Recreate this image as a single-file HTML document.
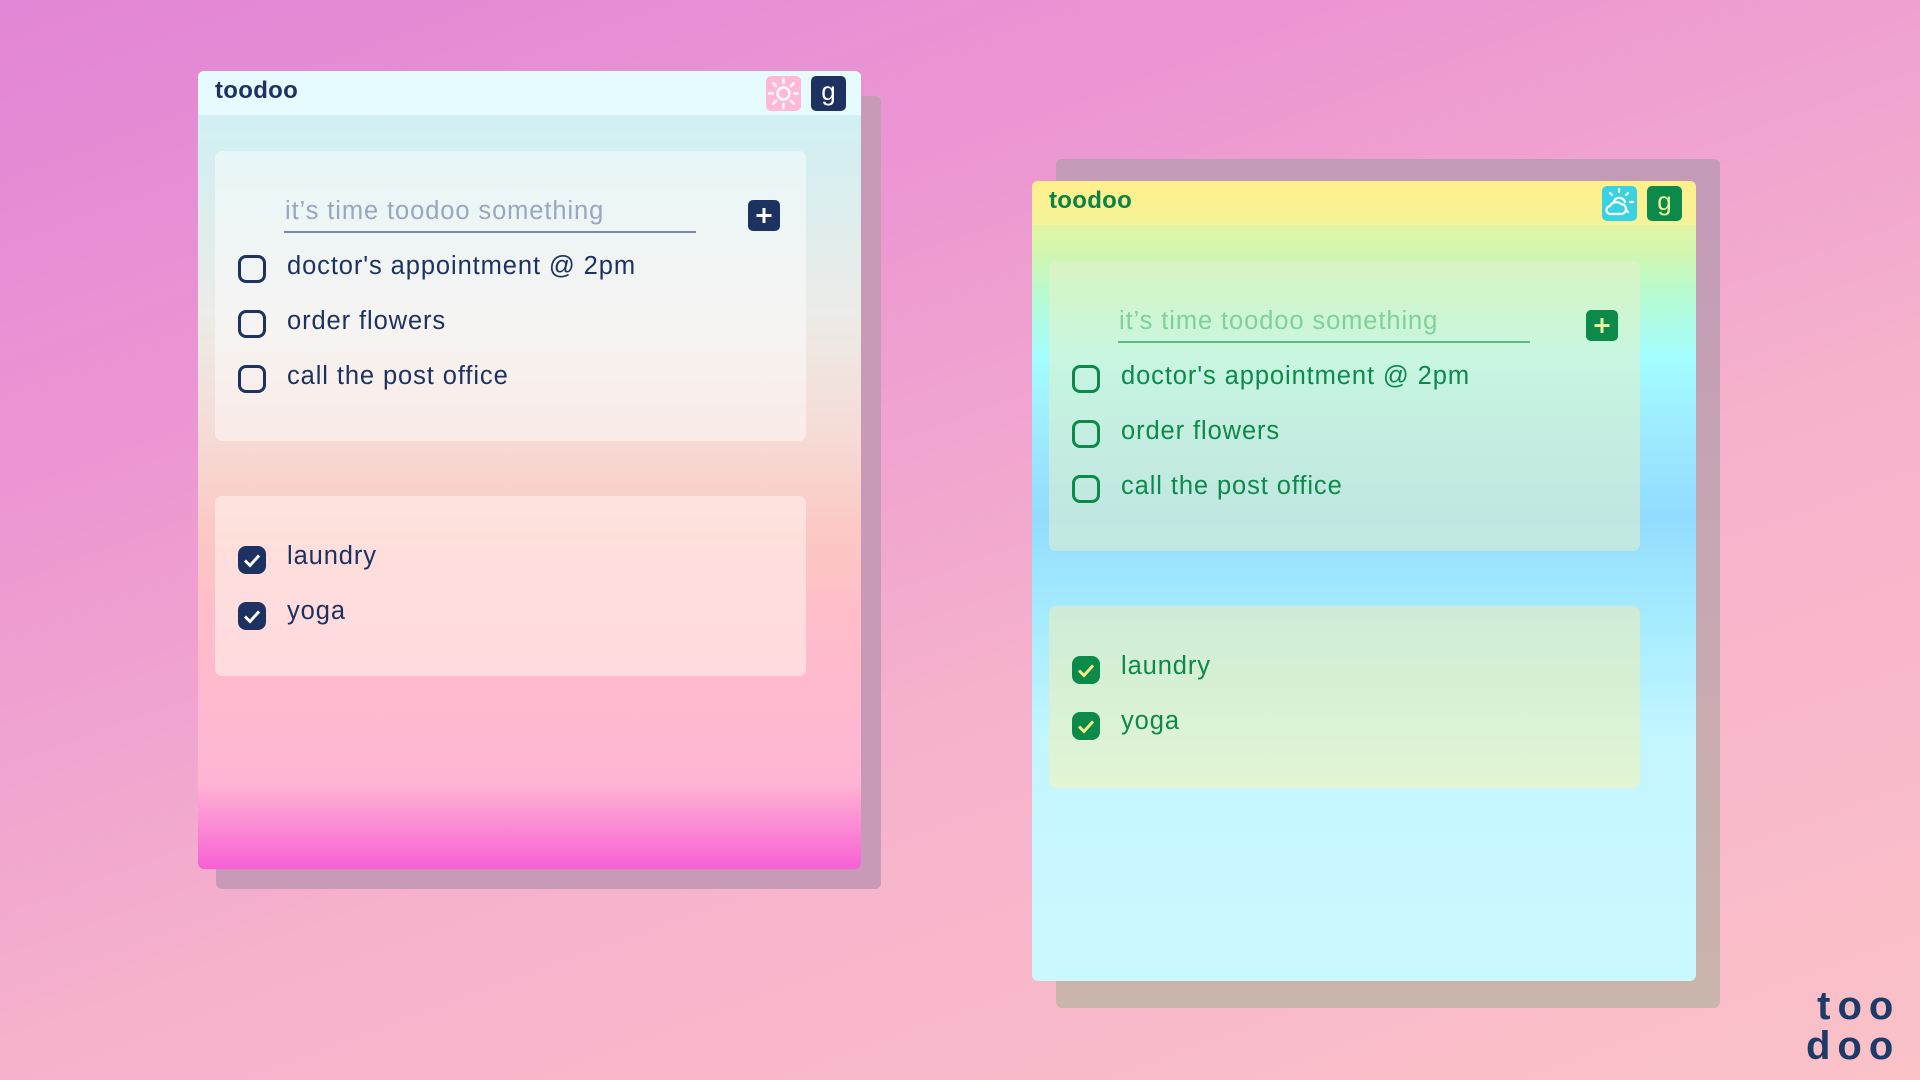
<!DOCTYPE html>
<html><head><meta charset="utf-8"><style>
*{margin:0;padding:0;box-sizing:border-box}
body{width:1920px;height:1080px;overflow:hidden;position:relative;font-family:"Liberation Sans",sans-serif;
background:linear-gradient(160deg,#e285d6 0%,#ec98d2 30%,#f6b2cc 60%,#fbc2c8 100%);}
.abs{position:absolute}
.shadow{border-radius:6px}
.win{border-radius:6px;overflow:hidden}
.hdr{position:absolute;left:0;top:0;right:0;height:44px}
.title{position:absolute;left:17px;top:6px;font-size:24px;font-weight:bold;letter-spacing:0.3px}
.card{position:absolute;left:17px;width:591px;border-radius:7px}
.t{position:absolute;font-size:25.5px;letter-spacing:0.9px;white-space:nowrap;line-height:30px}
.cb{position:absolute;width:28px;height:28px;border-radius:8px}
.ic{position:absolute;top:5px;width:35px;height:35px;border-radius:5px}
.g{font-size:26px;text-align:center;line-height:31px}
.plus{position:absolute;width:32px;height:31px;border-radius:5px}
</style></head><body>

<!-- left -->
<div class="abs shadow" style="left:216px;top:96px;width:665px;height:793px;background:#c89ab8"></div>
<div class="abs win" style="left:198px;top:71px;width:663px;height:798px;background:linear-gradient(180deg,#cdf3f7 0%,#d6eef0 12%,#ecece8 30%,#f6dcd6 45%,#fcc8c4 58%,#ffbcca 70%,#ffb6d4 89%,#f860d4 100%)">
  <div class="hdr" style="background:#e6fbfd"></div>
  <div class="title" style="color:#1d3260">toodoo</div>
  <div class="ic" style="left:568px;background:#ffb8d6">
    <svg width="35" height="35" viewBox="0 0 35 35" fill="none" stroke="#fff" stroke-width="2.4" stroke-linecap="round"><circle cx="17.5" cy="17.5" r="6"/><path d="M17.5 3v4M17.5 28v4M3 17.5h4M28 17.5h4M7.3 7.3l2.8 2.8M24.9 24.9l2.8 2.8M7.3 27.7l2.8-2.8M24.9 10.1l2.8-2.8"/></svg>
  </div>
  <div class="ic g" style="left:613px;background:#1d3260;color:#fff">g</div>
  <div class="card" style="top:80px;height:290px;background:rgba(255,255,255,0.45)">
    <div class="t" style="left:70px;top:45px;color:#9aa6bd">it’s time toodoo something</div>
    <div class="abs" style="left:69px;top:80px;width:412px;height:2px;background:#7a89a8"></div>
    <div class="plus" style="left:533px;top:49px;background:#1d3260"><svg width="32" height="31"><path d="M16 8v15M8.5 15.5h15" stroke="#fff" stroke-width="3"/></svg></div>
    <div class="cb" style="left:23px;top:104px;border:3px solid #1d3260"></div>
    <div class="t" style="left:72px;top:100px;color:#1d3260">doctor's appointment @ 2pm</div>
    <div class="cb" style="left:23px;top:159px;border:3px solid #1d3260"></div>
    <div class="t" style="left:72px;top:155px;color:#1d3260">order flowers</div>
    <div class="cb" style="left:23px;top:214px;border:3px solid #1d3260"></div>
    <div class="t" style="left:72px;top:210px;color:#1d3260">call the post office</div>
  </div>
  <div class="card" style="top:425px;height:180px;background:rgba(255,240,235,0.6)">
    <div class="cb" style="left:23px;top:50px;background:#1d3260"><svg width="28" height="28"><path d="M7 14.5l5 5 9-10" stroke="#fff" stroke-width="3" fill="none"/></svg></div>
    <div class="t" style="left:72px;top:45px;color:#1d3260">laundry</div>
    <div class="cb" style="left:23px;top:106px;background:#1d3260"><svg width="28" height="28"><path d="M7 14.5l5 5 9-10" stroke="#fff" stroke-width="3" fill="none"/></svg></div>
    <div class="t" style="left:72px;top:100px;color:#1d3260">yoga</div>
  </div>
</div>

<!-- right -->
<div class="abs shadow" style="left:1056px;top:159px;width:664px;height:849px;background:linear-gradient(180deg,#c39ab8,#cab5ac)"></div>
<div class="abs win" style="left:1032px;top:181px;width:664px;height:800px;background:linear-gradient(180deg,#f8f490 0%,#d2f6b0 9%,#b8fbd0 14%,#a4fdff 22%,#9ce8ff 33%,#92dcff 42%,#a6ecff 55%,#c4f6ff 70%,#cbf8ff 100%)">
  <div class="hdr" style="background:linear-gradient(180deg,#fff08a,#f5f29a)"></div>
  <div class="title" style="color:#0b8248">toodoo</div>
  <div class="ic" style="left:570px;background:#3ad2e2">
    <svg width="35" height="35" viewBox="0 0 35 35" fill="none" stroke="#fff" stroke-width="2.2" stroke-linecap="round"><path d="M17 3v3M26 7l-2 2M31 16h-3M8 7l2 2M12 15a6 6 0 0 1 11 1"/><path d="M9 28h10a5 5 0 0 0 0-10 7 7 0 0 0-11 2 4 4 0 0 0 1 8z"/><path d="M24 24l2 2"/></svg>
  </div>
  <div class="ic g" style="left:615px;background:#0b8a4a;color:#f0f0a0">g</div>
  <div class="card" style="top:80px;height:290px;background:rgba(230,240,200,0.55)">
    <div class="t" style="left:70px;top:45px;color:#7fd09a">it’s time toodoo something</div>
    <div class="abs" style="left:69px;top:80px;width:412px;height:2px;background:#5ab880"></div>
    <div class="plus" style="left:537px;top:49px;background:#0b8a4a"><svg width="32" height="31"><path d="M16 8v15M8.5 15.5h15" stroke="#e8f0a0" stroke-width="3"/></svg></div>
    <div class="cb" style="left:23px;top:104px;border:3px solid #0b8a4a"></div>
    <div class="t" style="left:72px;top:100px;color:#0b8a4a">doctor's appointment @ 2pm</div>
    <div class="cb" style="left:23px;top:159px;border:3px solid #0b8a4a"></div>
    <div class="t" style="left:72px;top:155px;color:#0b8a4a">order flowers</div>
    <div class="cb" style="left:23px;top:214px;border:3px solid #0b8a4a"></div>
    <div class="t" style="left:72px;top:210px;color:#0b8a4a">call the post office</div>
  </div>
  <div class="card" style="top:425px;height:182px;background:linear-gradient(180deg,#ceecd6,#e2f5d4)">
    <div class="cb" style="left:23px;top:50px;background:#0b8a4a"><svg width="28" height="28"><path d="M7 14.5l5 5 9-10" stroke="#f3e88a" stroke-width="3" fill="none"/></svg></div>
    <div class="t" style="left:72px;top:45px;color:#0b8a4a">laundry</div>
    <div class="cb" style="left:23px;top:106px;background:#0b8a4a"><svg width="28" height="28"><path d="M7 14.5l5 5 9-10" stroke="#f3e88a" stroke-width="3" fill="none"/></svg></div>
    <div class="t" style="left:72px;top:100px;color:#0b8a4a">yoga</div>
  </div>
</div>

<div class="abs" style="left:1806px;top:986px;font-size:40px;font-weight:bold;letter-spacing:7px;color:#1d3a68;line-height:40px;text-align:right">too<br>doo</div>
</body></html>
